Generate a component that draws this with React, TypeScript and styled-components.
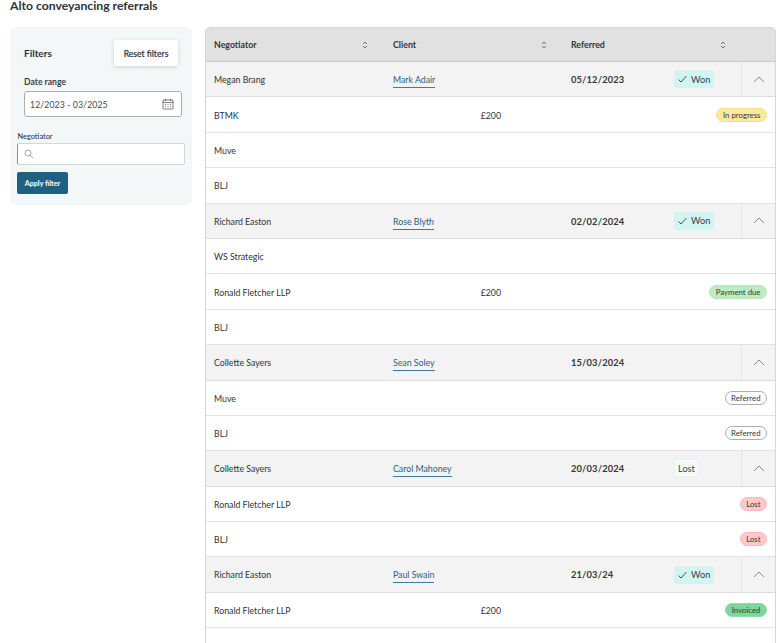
import React from "react";
import styled, { createGlobalStyle } from "styled-components";

const Global = createGlobalStyle`
  html, body { margin: 0; padding: 0; background: #fff; height: 643px; overflow: hidden; }
  body { font-family: Lato, "Open Sans", sans-serif; color: #2f3237; }
  * { box-sizing: border-box; }
`;

const Page = styled.div`
  width: 782px;
  height: 643px;
  overflow: hidden;
  padding: 0 6px 0 10px;
`;
const Title = styled.h1`
  margin: 0;
  height: 27px;
  font-size: 12.2px;
  line-height: 12px;
  font-weight: 700;
  color: #2f3237;
`;
const Layout = styled.div`
  display: flex;
  align-items: flex-start;
  gap: 13px;
`;
const Panel = styled.aside`
  width: 182px;
  height: 178px;
  flex: none;
  background: #f3f7f8;
  border-radius: 5px;
  padding: 13px 7px 0;
`;
const PanelHead = styled.div`
  display: flex;
  align-items: center;
  justify-content: space-between;
  padding: 0 7px;
  height: 26px;
`;
const PanelTitle = styled.span`
  font-size: 10px;
  font-weight: 700;
`;
const ResetButton = styled.button`
  width: 64px;
  height: 26px;
  border: 0;
  padding: 1px 0 0;
  background: #fff;
  border-radius: 2px;
  font: 500 8.6px Lato, sans-serif;
  -webkit-text-stroke: 0.15px #2f3237;
  color: #2f3237;
  box-shadow: 0 1px 4px rgba(40, 50, 60, 0.18);
`;
const DateBlock = styled.div`
  padding: 10px 3px 0 7px;
`;
const DateLabel = styled.div`
  font-size: 8.6px;
  font-weight: 700;
  line-height: 11px;
  margin-top: 1px;
  color: #3b3f44;
`;
const DateInput = styled.div`
  margin-top: 3px;
  height: 26px;
  background: #fff;
  border: 1px solid #a9adb1;
  border-radius: 3px;
  display: flex;
  align-items: center;
  justify-content: space-between;
  padding: 0 7px 0 5px;
  font-size: 8.7px;
  letter-spacing: 0.1px;
  color: #45494e;
`;
const NegotiatorBlock = styled.div`
  margin-top: 15px;
`;
const NegotiatorLabel = styled.div`
  font-size: 7.4px;
  line-height: 10px;
  margin-top: 3px;
  padding-left: 0.5px;
  color: #1f2933;
`;
const SearchInput = styled.div`
  margin-top: 1px;
  height: 22px;
  background: #fff;
  border: 1px solid #d3d6d9;
  border-left-color: #8c9196;
  border-radius: 2px;
  display: flex;
  align-items: center;
  padding-left: 6px;
`;
const ApplyButton = styled.button`
  display: block;
  margin-top: 7px;
  width: 51px;
  height: 22px;
  border: 0;
  padding: 0;
  border-radius: 2px;
  background: #1f5f82;
  color: #fff;
  font: 700 7.2px Lato, sans-serif;
`;
const Table = styled.section`
  width: 571px;
  height: 620px;
  flex: none;
  border: solid #d6d6d6;
  border-width: 1px 1px 0 1px;
  border-radius: 5px 5px 0 0;
  overflow: hidden;
`;
const HeadRow = styled.div`
  display: grid;
  grid-template-columns: 179px 178px 1fr;
  height: 34px;
  background: #e1e1e1;
  border-bottom: 1px solid #c9c9c9;
`;
const HeadCell = styled.div<{ $end: number }>`
  display: flex;
  align-items: center;
  justify-content: space-between;
  padding: 0 ${(p) => p.$end}px 0 8px;
  font-size: 8.8px;
  font-weight: 700;
  color: #33373b;
`;
const GroupRow = styled.div`
  display: grid;
  grid-template-columns: 179px 178px 111px 67px 1fr;
  align-items: center;
  height: 35.4px;
  background: #f3f3f3;
  border-bottom: 1px solid #dcdcdc;
  font-size: 8.75px;
`;
const Cell = styled.div`
  padding-left: 8px;
  padding-top: 0.5px;
`;
const ClientLink = styled.a`
  color: #1f5f82;
  border-bottom: 1px solid #3d7c9e;
  padding-bottom: 2px;
`;
const DateCell = styled.div`
  padding-left: 8px;
  padding-top: 0.5px;
  font-weight: 700;
  font-size: 9.3px;
  letter-spacing: 0.15px;
  color: #33373b;
`;
const OutcomeCell = styled.div`
  display: flex;
  align-items: center;
  height: 100%;
`;
const Outcome = styled.span<{ $won?: boolean }>`
  display: inline-flex;
  align-items: center;
  gap: 4px;
  height: 18px;
  padding: 0 3px;
  border-radius: 2px;
  font-size: 9.2px;
  color: #3a3e42;
  background: ${(p) => (p.$won ? "#d2f4f2" : "#f6fafb")};
  border: 1px solid ${(p) => (p.$won ? "#d2f4f2" : "#e6f5f6")};
`;
const ToggleCell = styled.div`
  height: 100%;
  border-left: 1px solid #e6e6e6;
  display: flex;
  align-items: center;
  justify-content: center;
`;
const DetailRow = styled.div`
  display: grid;
  grid-template-columns: 295px 1fr;
  align-items: center;
  height: 35.4px;
  background: #fff;
  border-bottom: 1px solid #e3e3e3;
  padding-right: 8px;
  font-size: 8.75px;
`;
const DetailName = styled.div`
  padding: 1px 0 0 8px;
  display: flex;
  justify-content: space-between;
`;
const Pill = styled.span<{ $bg: string; $bd: string }>`
  justify-self: end;
  display: inline-flex;
  align-items: center;
  height: 14px;
  padding: 0 5.5px;
  border-radius: 7px;
  font-size: 7.8px;
  color: #33373b;
  background: ${(p) => p.$bg};
  border: 1px solid ${(p) => p.$bd};
`;

const Sort = () => (
  <svg width="6" height="8" viewBox="0 0 6 8" fill="none" stroke="#55595d" strokeWidth="0.8">
    <path d="M1 3 L3 1 L5 3" />
    <path d="M1 5 L3 7 L5 5" />
  </svg>
);
const Chevron = () => (
  <svg width="12" height="7" viewBox="0 0 12 7" fill="none" stroke="#6a6e72" strokeWidth="0.8">
    <path d="M1 6 L6 1 L11 6" />
  </svg>
);
const Check = () => (
  <svg width="9" height="8" viewBox="0 0 9 8" fill="none" stroke="#3a3e42" strokeWidth="0.9">
    <path d="M0.5 4.5 L3 7 L8.5 1" />
  </svg>
);
const CalendarIcon = () => (
  <svg width="12" height="12" viewBox="0 0 12 12" fill="none" stroke="#55595d" strokeWidth="0.8">
    <rect x="1" y="2" width="10" height="9" rx="0.5" />
    <path d="M1 4.5 H11 M3.5 0.8 V3 M8.5 0.8 V3" />
    <path d="M3 6.5 H4 M5.5 6.5 H6.5 M8 6.5 H9 M3 8.7 H4 M5.5 8.7 H6.5 M8 8.7 H9" />
  </svg>
);
const SearchIcon = () => (
  <svg width="10" height="10" viewBox="0 0 10 10" fill="none" stroke="#6a6e72" strokeWidth="0.6">
    <circle cx="4" cy="4" r="3" />
    <path d="M6.2 6.2 L9 9" />
  </svg>
);

type Status = "progress" | "due" | "referred" | "lost" | "invoiced";
const pills: Record<Status, { text: string; bg: string; bd: string }> = {
  progress: { text: "In progress", bg: "#fde99a", bd: "#f5e08c" },
  due: { text: "Payment due", bg: "#bdecc3", bd: "#b4e6bb" },
  referred: { text: "Referred", bg: "#fff", bd: "#a9adb1" },
  lost: { text: "Lost", bg: "#ffc9cb", bd: "#f7b9bc" },
  invoiced: { text: "Invoiced", bg: "#7dd69d", bd: "#8bdcaa" },
};

type Detail = { name: string; fee?: string; status?: Status };
type Group = { negotiator: string; client: string; date: string; outcome?: "Won" | "Lost"; details: Detail[] };

const groups: Group[] = [
  { negotiator: "Megan Brang", client: "Mark Adair", date: "05/12/2023", outcome: "Won", details: [
    { name: "BTMK", fee: "£200", status: "progress" }, { name: "Muve" }, { name: "BLJ" } ] },
  { negotiator: "Richard Easton", client: "Rose Blyth", date: "02/02/2024", outcome: "Won", details: [
    { name: "WS Strategic" }, { name: "Ronald Fletcher LLP", fee: "£200", status: "due" }, { name: "BLJ" } ] },
  { negotiator: "Collette Sayers", client: "Sean Soley", date: "15/03/2024", details: [
    { name: "Muve", status: "referred" }, { name: "BLJ", status: "referred" } ] },
  { negotiator: "Collette Sayers", client: "Carol Mahoney", date: "20/03/2024", outcome: "Lost", details: [
    { name: "Ronald Fletcher LLP", status: "lost" }, { name: "BLJ", status: "lost" } ] },
  { negotiator: "Richard Easton", client: "Paul Swain", date: "21/03/24", outcome: "Won", details: [
    { name: "Ronald Fletcher LLP", fee: "£200", status: "invoiced" } ] },
];

export default function App() {
  return (
    <Page>
      <Global />
      <Title>Alto conveyancing referrals</Title>
      <Layout>
        <Panel>
          <PanelHead>
            <PanelTitle>Filters</PanelTitle>
            <ResetButton>Reset filters</ResetButton>
          </PanelHead>
          <DateBlock>
            <DateLabel>Date range</DateLabel>
            <DateInput>
              <span>12/2023 - 03/2025</span>
              <CalendarIcon />
            </DateInput>
          </DateBlock>
          <NegotiatorBlock>
            <NegotiatorLabel>Negotiator</NegotiatorLabel>
            <SearchInput><SearchIcon /></SearchInput>
            <ApplyButton>Apply filter</ApplyButton>
          </NegotiatorBlock>
        </Panel>
        <Table>
          <HeadRow>
            <HeadCell $end={17}>Negotiator <Sort /></HeadCell>
            <HeadCell $end={16}>Client <Sort /></HeadCell>
            <HeadCell $end={49}>Referred <Sort /></HeadCell>
          </HeadRow>
          {groups.map((g) => (
            <React.Fragment key={g.client}>
              <GroupRow>
                <Cell>{g.negotiator}</Cell>
                <Cell><ClientLink>{g.client}</ClientLink></Cell>
                <DateCell>{g.date}</DateCell>
                <OutcomeCell>
                  {g.outcome && (
                    <Outcome $won={g.outcome === "Won"}>
                      {g.outcome === "Won" && <Check />}
                      {g.outcome}
                    </Outcome>
                  )}
                </OutcomeCell>
                <ToggleCell><Chevron /></ToggleCell>
              </GroupRow>
              {g.details.map((d) => (
                <DetailRow key={d.name}>
                  <DetailName><span>{d.name}</span>{d.fee && <span>{d.fee}</span>}</DetailName>
                  {d.status ? <Pill $bg={pills[d.status].bg} $bd={pills[d.status].bd}>{pills[d.status].text}</Pill> : <span />}
                </DetailRow>
              ))}
            </React.Fragment>
          ))}
        </Table>
      </Layout>
    </Page>
  );
}
